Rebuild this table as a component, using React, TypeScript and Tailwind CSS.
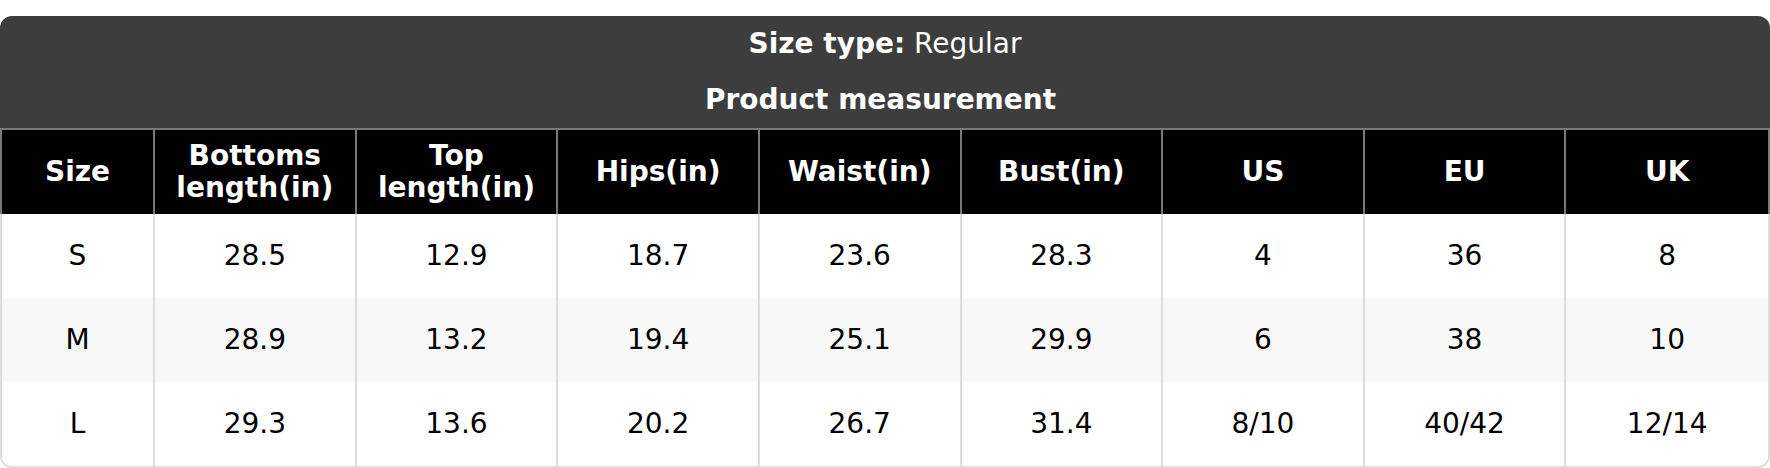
const headers = ['Size', 'Bottoms length(in)', 'Top length(in)', 'Hips(in)', 'Waist(in)', 'Bust(in)', 'US', 'EU', 'UK'];

const rows = [
  ['S', '28.5', '12.9', '18.7', '23.6', '28.3', '4', '36', '8'],
  ['M', '28.9', '13.2', '19.4', '25.1', '29.9', '6', '38', '10'],
  ['L', '29.3', '13.6', '20.2', '26.7', '31.4', '8/10', '40/42', '12/14'],
];

export default function App() {
  return (
    <div className="w-[1770px] h-[468px] bg-white pt-[16px] font-['DejaVu_Sans',sans-serif] text-[28px] leading-[32px]">
      {/* Title block */}
      <div className="bg-[#3d3d3d] rounded-t-[12px] text-white text-center pt-[12px] pb-[12px]">
        <p>
          <span className="font-bold">Size type:</span> Regular
        </p>
        <p className="mt-[24px] pr-[9px] font-bold">Product measurement</p>
      </div>

      {/* Column headers */}
      <div className="grid grid-cols-[153px_repeat(8,minmax(0,1fr))] h-[86px] bg-black border-t-2 border-x-2 border-[#787878] divide-x-2 divide-[#787878]">
        {headers.map((h) => (
          <div key={h} className="flex items-center justify-center text-center text-white font-bold px-2">
            {h}
          </div>
        ))}
      </div>

      {/* Body */}
      <div className="border-x-2 border-b-2 border-[#dddddd] rounded-b-[12px] overflow-hidden">
        {rows.map((r, i) => (
          <div
            key={r[0]}
            className={`grid grid-cols-[153px_repeat(8,minmax(0,1fr))] h-[84px] divide-x-2 divide-[#dddddd] ${i === 1 ? 'bg-[#f8f8f8]' : 'bg-white'}`}
          >
            {r.map((c, j) => (
              <div key={j} className="flex items-center justify-center text-black">
                {c}
              </div>
            ))}
          </div>
        ))}
      </div>
    </div>
  );
}
